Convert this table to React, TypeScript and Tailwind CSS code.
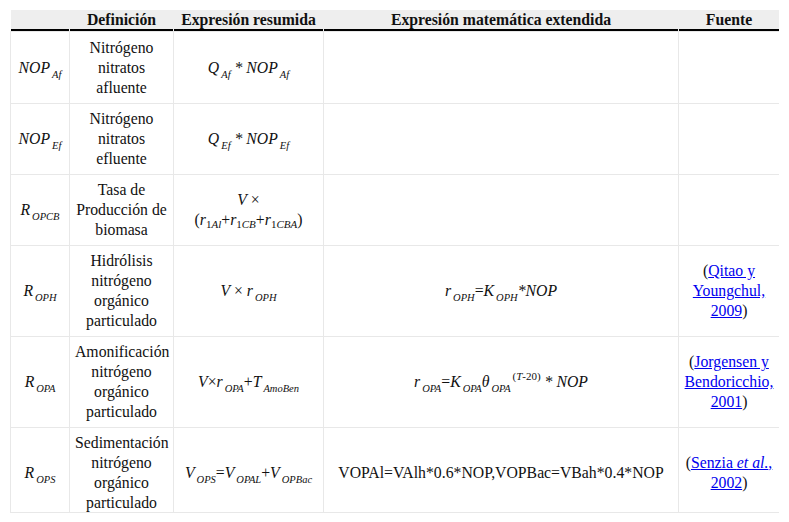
import React from 'react';

type Kid = { children: React.ReactNode };

// subíndice cursivo pequeño, como en el original
function Sub({ children }: Kid) {
  return <sub className="text-[10.5px] italic ml-[2px] bottom-[-5px]">{children}</sub>;
}

function Sup({ children }: Kid) {
  return <sup className="text-[11px] ml-[2px] top-[-7px]">{children}</sup>;
}

function Ref({ children }: Kid) {
  return <a href="#" className="text-[#0000ee] underline underline-offset-1">{children}</a>;
}

interface Row {
  sym: React.ReactNode;
  def: React.ReactNode;
  short: React.ReactNode;
  ext?: React.ReactNode;
  src?: React.ReactNode;
}

const rows: Row[] = [
  {
    sym: <><i>NOP</i><Sub>Af</Sub></>,
    def: <>Nitrógeno<br />nitratos<br />afluente</>,
    short: <><i>Q</i><Sub>Af</Sub><i> * NOP</i><Sub>Af</Sub></>,
  },
  {
    sym: <><i>NOP</i><Sub>Ef</Sub></>,
    def: <>Nitrógeno<br />nitratos<br />efluente</>,
    short: <><i>Q</i><Sub>Ef</Sub><i> * NOP</i><Sub>Ef</Sub></>,
  },
  {
    sym: <><i>R</i><Sub>OPCB</Sub></>,
    def: <>Tasa de<br />Producción de<br />biomasa</>,
    short: (
      <>
        <i>V</i> ×<br />
        (<i>r</i><sub className="text-[11px] bottom-[-3px]">1<i>Al</i></sub>+<i>r</i>
        <sub className="text-[11px] bottom-[-3px]">1<i>CB</i></sub>+<i>r</i>
        <sub className="text-[11px] bottom-[-3px]">1<i>CBA</i></sub>)
      </>
    ),
  },
  {
    sym: <><i>R</i><Sub>OPH</Sub></>,
    def: <>Hidrólisis<br />nitrógeno<br />orgánico<br />particulado</>,
    short: <><i>V</i> × <i>r</i><Sub>OPH</Sub></>,
    ext: <><i>r</i><Sub>OPH</Sub>=<i>K</i><Sub>OPH</Sub><i>*NOP</i></>,
    src: <>(<Ref>Qitao y Youngchul, 2009</Ref>)</>,
  },
  {
    sym: <><i>R</i><Sub>OPA</Sub></>,
    def: <>Amonificación<br />nitrógeno<br />orgánico<br />particulado</>,
    short: <><i>V</i>×<i>r</i><Sub>OPA</Sub>+<i>T</i><Sub>AmoBen</Sub></>,
    ext: (
      <>
        <i>r</i><Sub>OPA</Sub>=<i>K</i><Sub>OPA</Sub><i>θ</i><Sub>OPA</Sub>
        <Sup>(<i>T</i>-20)</Sup> <i>* NOP</i>
      </>
    ),
    src: <>(<Ref>Jorgensen y Bendoricchio, 2001</Ref>)</>,
  },
  {
    sym: <><i>R</i><Sub>OPS</Sub></>,
    def: <>Sedimentación<br />nitrógeno<br />orgánico<br />particulado</>,
    short: <><i>V</i><Sub>OPS</Sub>=<i>V</i><Sub>OPAL</Sub>+<i>V</i><Sub>OPBac</Sub></>,
    ext: <>VOPAl=VAlh*0.6*NOP,VOPBac=VBah*0.4*NOP</>,
    src: <>(<Ref>Senzia <i>et al.</i>, 2002</Ref>)</>,
  },
];

const th =
  "relative h-[21px] pb-[2px] font-bold leading-[19px] text-center after:content-[''] after:absolute after:left-0 after:right-px after:bottom-0 after:h-[2px] after:bg-black";
const td = 'border border-[#e8e8e8] px-[5px] py-[5px] text-center align-middle';

export default function App() {
  return (
    <div className="[font-family:Liberation_Serif,serif] w-[789px] h-[522px] bg-white pt-[10px] pl-[10px] text-[15.75px] leading-[20px] text-[#111]">
      <div className="w-[769px] h-[503px] overflow-hidden border-b border-[#e8e8e8]">
        <table className="[font-family:Liberation_Serif,serif] w-[769px] table-fixed border-collapse text-[15.75px] leading-[20px]">
          <colgroup>
            <col className="w-[59px]" />
            <col className="w-[104px]" />
            <col className="w-[150px]" />
            <col className="w-[355px]" />
            <col className="w-[101px]" />
          </colgroup>
          <thead>
            <tr className="bg-[#eeeeee]">
              <th className={th}></th>
              <th className={th}>Definición</th>
              <th className={th}>Expresión resumida</th>
              <th className={th}>Expresión matemática extendida</th>
              <th className={th}>Fuente</th>
            </tr>
          </thead>
          <tbody>
            {rows.map((r, i) => (
              <tr key={i} className={i === 0 ? 'h-[72px]' : ''}>
                <td className={`${td} whitespace-nowrap px-[3px]`}>{r.sym}</td>
                <td className={`${td} px-[3px]`}>{r.def}</td>
                <td className={`${td} px-[3px]`}>{r.short}</td>
                <td className={td}>{r.ext}</td>
                <td className={`${td} px-[3px]`}>{r.src}</td>
              </tr>
            ))}
          </tbody>
        </table>
      </div>
    </div>
  );
}
